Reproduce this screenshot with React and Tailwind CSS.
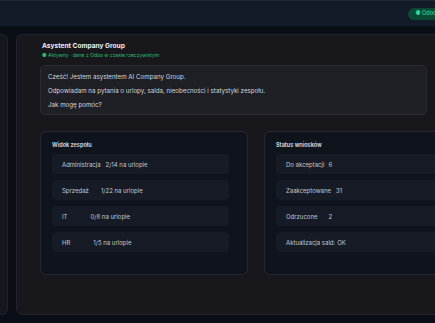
const team = [
  { label: 'Administracja', value: '2/14 na urlopie', gap: 'ml-[5px]' },
  { label: 'Sprzedaż', value: '1/22 na urlopie', gap: 'ml-[12px]' },
  { label: 'IT', value: '0/8 na urlopie', gap: 'ml-[23px]' },
  { label: 'HR', value: '1/5 na urlopie', gap: 'ml-[23px]' },
]

const requests = [
  { label: 'Do akceptacji', value: '6', gap: 'ml-[4px]' },
  { label: 'Zaakceptowane', value: '31', gap: 'ml-[5px]' },
  { label: 'Odrzucone', value: '2', gap: 'ml-[11px]' },
  { label: 'Aktualizacja sald:', value: 'OK', gap: 'ml-[2px]' },
]

function Card({ title, rows }) {
  return (
    <div className="w-[208px] h-[144px] shrink-0 rounded-[6px] border border-[#232937] bg-[#0f131c] pl-[11px] pr-[18px] pt-[10px]">
      <h3 className="text-[5.5px] leading-[7px] font-bold text-[#c9d0dc]">{title}</h3>
      <div className="mt-[5px] flex flex-col gap-[6px]">
        {rows.map((r) => (
          <div
            key={r.label}
            className="h-[20px] flex items-center rounded-[4px] bg-[#171b25] pl-[10px] text-[6px] text-[#c3c8d1]"
          >
            <span>{r.label}</span>
            <span className={r.gap}>{r.value}</span>
          </div>
        ))}
      </div>
    </div>
  )
}

export default function App() {
  return (
    <div className="w-[435px] h-[323px] overflow-hidden bg-[#0a0e17] font-['Inter',sans-serif]">
      <div className="w-[480px]">
        <header className="h-[26px] border-t border-[#1f2636] bg-[#131a28] flex items-center justify-end pr-[7px]">
          <div className="h-[12px] flex items-center rounded-full bg-[#0b4a35] px-[8px] text-[5.5px] font-medium text-[#34d399]">
            ● Odoo połączone
          </div>
        </header>
        <div className="flex gap-[8px] pt-[8px]">
          <aside className="w-[8px] h-[281px] shrink-0 rounded-r-[6px] border border-l-0 border-[#1e222c] bg-[#16171c]" />
          <main className="h-[281px] flex-1 rounded-[6px] border border-[#20232c] bg-[#17171c] pl-[23px] pt-[7px]">
            <div className="pl-[2px]">
              <h1 className="text-[6.6px] leading-[9px] font-bold text-[#eceef2]">Asystent Company Group</h1>
              <p className="mt-[1px] text-[5px] leading-[7px] text-[#2fbf71]">● Aktywny · dane z Odoo w czasie rzeczywistym</p>
            </div>
            <div className="mt-[6px] w-[387px] h-[50px] rounded-[5px] border border-[#2a2c33] bg-[#1f2026] pl-[7px] pt-[6px] flex flex-col gap-[5px] text-[6.2px] leading-[9px] text-[#d4d7dd]">
              <p>Cześć! Jestem asystentem AI Company Group.</p>
              <p>Odpowiadam na pytania o urlopy, salda, nieobecności i statystyki zespołu.</p>
              <p>Jak mogę pomóc?</p>
            </div>
            <div className="mt-[16px] flex gap-[16px]">
              <Card title="Widok zespołu" rows={team} />
              <Card title="Status wniosków" rows={requests} />
            </div>
          </main>
        </div>
      </div>
    </div>
  )
}
